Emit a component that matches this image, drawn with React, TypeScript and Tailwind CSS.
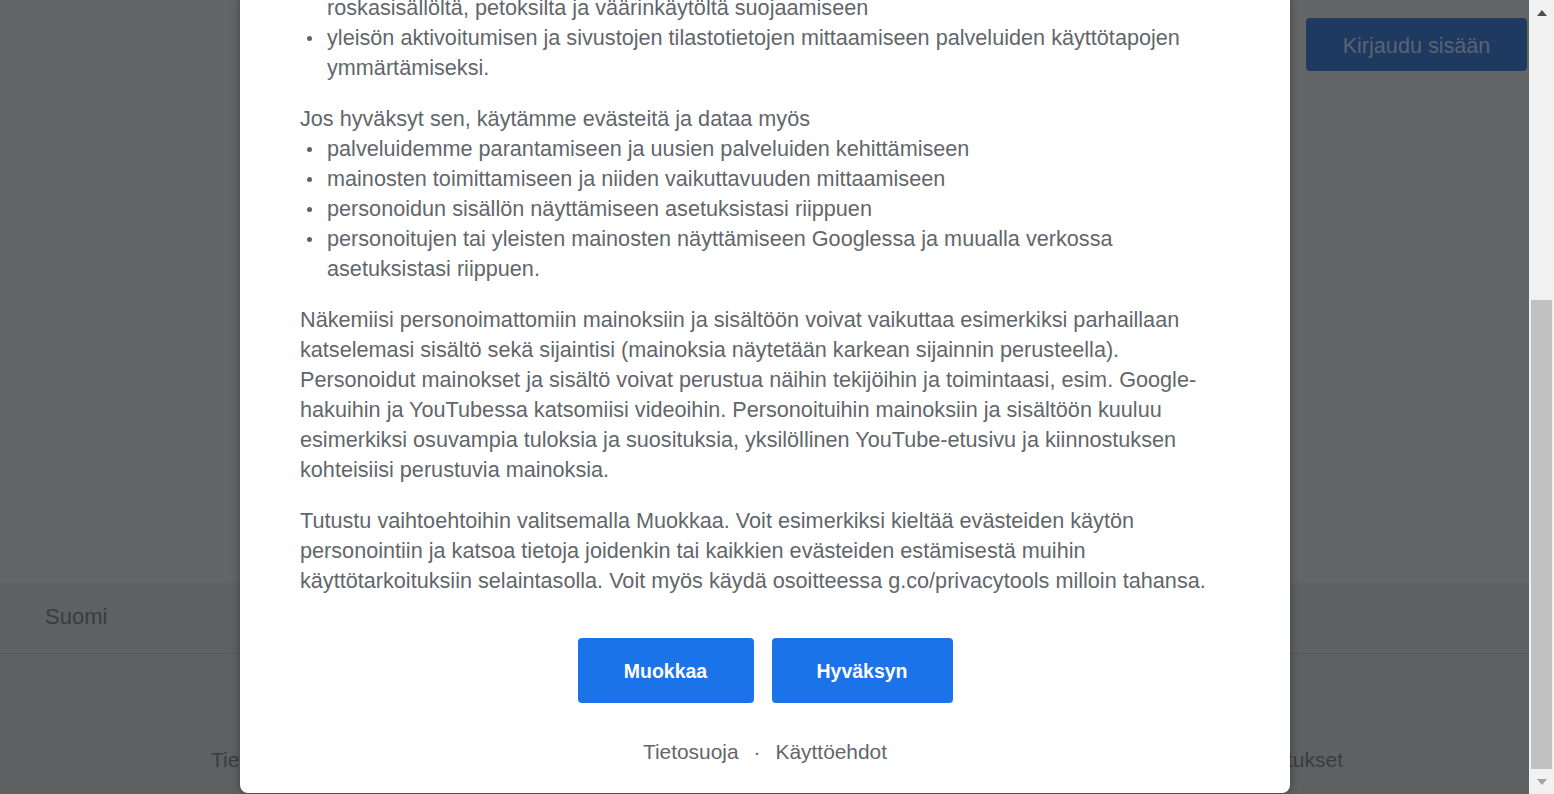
import React from "react";

function Bullet({ children }: { children: React.ReactNode }) {
  return (
    <div className="flex">
      <div className="w-[27px] shrink-0 pl-[7px] pt-[13px]">
        <div className="h-[5px] w-[5px] rounded-full bg-[#5f6368]" />
      </div>
      <div>{children}</div>
    </div>
  );
}

function Line({ children }: { children: React.ReactNode }) {
  return <div className="whitespace-nowrap">{children}</div>;
}

export default function App() {
  return (
    <div className="flex h-[794px] w-[1554px] overflow-hidden font-['Liberation_Sans',Arial,sans-serif]">
      <div className="relative flex h-full w-[1529px] flex-col bg-[#646567]">
        {/* page behind overlay */}
        <div className="flex h-[583px] shrink-0 justify-end pr-[2px] pt-[18px]">
          <div className="flex h-[53px] w-[221px] items-center justify-center rounded-[4px] bg-[#1f3a60] pt-[3px] text-[21.6px] text-[#5b6371]">
            Kirjaudu sisään
          </div>
        </div>
        <div className="flex h-[71px] shrink-0 items-center border-b border-[#57585a] bg-[#5f6062] pb-[4px] pl-[45px] text-[22px] text-[#3b3c3f]">
          Suomi
        </div>
        <div className="flex flex-1 items-start justify-between bg-[#5f6062] pl-[211px] pr-[186px] pt-[91px] text-[21px] leading-[30px] text-[#3b3c3f]">
          <div className="flex gap-8">
            <span>Tietosuoja</span>
            <span>Käyttöehdot</span>
          </div>
          <span>Asetukset</span>
        </div>

        {/* modal */}
        <div className="absolute left-[240px] top-[-7px] w-[1050px] rounded-[8px] bg-white px-[60px] pb-[26px] text-[21.65px] leading-[30px] text-[#62666b] shadow-[0_0_10px_rgba(0,0,0,0.35)]">
          <div className="pl-[27px]">
            <Line>roskasisällöltä, petoksilta ja väärinkäytöltä suojaamiseen</Line>
          </div>
          <Bullet>
            <Line>yleisön aktivoitumisen ja sivustojen tilastotietojen mittaamiseen palveluiden käyttötapojen</Line>
            <Line>ymmärtämiseksi.</Line>
          </Bullet>

          <div className="mt-[21px]">
            <Line>Jos hyväksyt sen, käytämme evästeitä ja dataa myös</Line>
            <Bullet>
              <Line>palveluidemme parantamiseen ja uusien palveluiden kehittämiseen</Line>
            </Bullet>
            <Bullet>
              <Line>mainosten toimittamiseen ja niiden vaikuttavuuden mittaamiseen</Line>
            </Bullet>
            <Bullet>
              <Line>personoidun sisällön näyttämiseen asetuksistasi riippuen</Line>
            </Bullet>
            <Bullet>
              <Line>personoitujen tai yleisten mainosten näyttämiseen Googlessa ja muualla verkossa</Line>
              <Line>asetuksistasi riippuen.</Line>
            </Bullet>
          </div>

          <div className="mt-[21px]">
            <Line>Näkemiisi personoimattomiin mainoksiin ja sisältöön voivat vaikuttaa esimerkiksi parhaillaan</Line>
            <Line>katselemasi sisältö sekä sijaintisi (mainoksia näytetään karkean sijainnin perusteella).</Line>
            <Line>Personoidut mainokset ja sisältö voivat perustua näihin tekijöihin ja toimintaasi, esim. Google-</Line>
            <Line>hakuihin ja YouTubessa katsomiisi videoihin. Personoituihin mainoksiin ja sisältöön kuuluu</Line>
            <Line>esimerkiksi osuvampia tuloksia ja suosituksia, yksilöllinen YouTube-etusivu ja kiinnostuksen</Line>
            <Line>kohteisiisi perustuvia mainoksia.</Line>
          </div>

          <div className="mt-[21px]">
            <Line>Tutustu vaihtoehtoihin valitsemalla Muokkaa. Voit esimerkiksi kieltää evästeiden käytön</Line>
            <Line>personointiin ja katsoa tietoja joidenkin tai kaikkien evästeiden estämisestä muihin</Line>
            <Line>käyttötarkoituksiin selaintasolla. Voit myös käydä osoitteessa g.co/privacytools milloin tahansa.</Line>
          </div>

          <div className="mt-[42px] flex justify-center gap-[18px]">
            <button className="flex h-[65px] w-[176px] items-center justify-center rounded-[4px] bg-[#1a73e8] text-[19.5px] font-bold text-white">
              Muokkaa
            </button>
            <button className="flex h-[65px] w-[181px] items-center justify-center rounded-[4px] bg-[#1a73e8] text-[19.5px] font-bold text-white">
              Hyväksyn
            </button>
          </div>

          <div className="mt-[34px] flex justify-center text-[20.9px] leading-[30px] text-[#62666b]">
            <span>Tietosuoja</span>
            <span className="mx-[15px]">·</span>
            <span>Käyttöehdot</span>
          </div>
        </div>
      </div>

      {/* scrollbar */}
      <div className="flex w-[25px] shrink-0 flex-col bg-[#f1f1f1]">
        <div className="flex h-[25px] shrink-0 items-center justify-center">
          <svg width="10" height="6" viewBox="0 0 10 6">
            <polygon points="0,6 10,6 5,0" fill="#505050" />
          </svg>
        </div>
        <div className="h-[275px] shrink-0" />
        <div className="mx-[2px] h-[469px] shrink-0 bg-[#c1c1c1]" />
        <div className="flex flex-1 items-center justify-center">
          <svg width="10" height="6" viewBox="0 0 10 6">
            <polygon points="0,0 10,0 5,6" fill="#a3a3a3" />
          </svg>
        </div>
      </div>
    </div>
  );
}
